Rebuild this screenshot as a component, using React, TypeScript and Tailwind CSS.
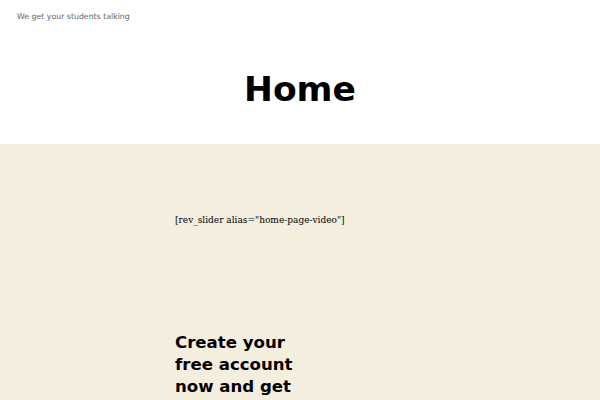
export default function App() {
  return (
    <div className="min-h-[400px] bg-white font-['DejaVu_Sans',sans-serif]">
      <header className="px-[17px] pt-[12px] h-[64px]">
        <p className="text-[7.8px] leading-[10px] text-[#666]">We get your students talking</p>
      </header>
      <div className="h-[80px] flex justify-center pt-[1px]">
        <h1 className="text-[34.5px] leading-[48px] font-bold text-black">Home</h1>
      </div>
      <main className="bg-[#f4eedf] min-h-[256px]">
        <div className="w-[250px] mx-auto pt-[71px]">
          <p className="font-['DejaVu_Serif',serif] text-[9px] leading-[11px] text-black">
            [rev_slider alias="home-page-video"]
          </p>
          <div className="flex mt-[106px]">
            <h2 className="w-[130px] text-[16.6px] leading-[22px] font-bold text-black">
              Create your free account now and get
            </h2>
          </div>
        </div>
      </main>
    </div>
  );
}
